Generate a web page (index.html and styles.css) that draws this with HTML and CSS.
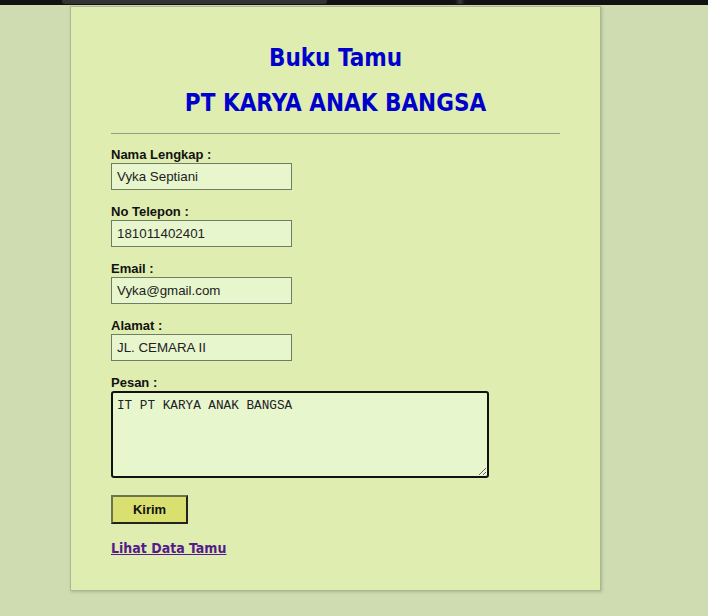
FILE: index.html
```html
<!DOCTYPE html>
<html lang="id">
<head>
<meta charset="utf-8">
<title>Buku Tamu</title>
<link rel="stylesheet" href="styles.css">
</head>
<body>
<div class="topbar"><span class="tab"></span><span class="tab2"></span></div>
<div class="card">
  <h2 class="title first">Buku Tamu</h2>
  <h2 class="title">PT KARYA ANAK BANGSA</h2>
  <hr class="rule">
  <form class="form">
    <div class="field">
      <label class="label">Nama Lengkap :</label>
      <input class="input" type="text" value="Vyka Septiani">
    </div>
    <div class="field">
      <label class="label">No Telepon :</label>
      <input class="input" type="text" value="181011402401">
    </div>
    <div class="field">
      <label class="label">Email :</label>
      <input class="input" type="text" value="Vyka@gmail.com">
    </div>
    <div class="field">
      <label class="label">Alamat :</label>
      <input class="input" type="text" value="JL. CEMARA II">
    </div>
    <div class="field">
      <label class="label">Pesan :</label>
      <textarea class="textarea">IT PT KARYA ANAK BANGSA</textarea>
    </div>
    <button class="button" type="button">Kirim</button>
  </form>
  <a class="link" href="#">Lihat Data Tamu</a>
</div>
</body>
</html>
```
FILE: styles.css
```css
html, body {
  margin: 0;
  padding: 0;
}
body {
  background: #cfdcb2;
  font-family: "Liberation Sans", Arial, sans-serif;
  height: 616px;
  overflow: hidden;
}
.topbar {
  height: 5px;
  background: #121212;
  position: relative;
  margin-bottom: 1px;
}
.tab {
  position: absolute;
  left: 62px;
  width: 265px;
  top: 0;
  height: 4px;
  background: #333333;
  border-radius: 0 0 3px 3px;
}
.tab2 {
  position: absolute;
  left: 455px;
  width: 10px;
  top: 0;
  height: 4px;
  background: linear-gradient(90deg, #121212, #3a3a3a, #121212);
}
.card {
  margin-left: 70px;
  width: 449px;
  padding: 37px 40px 33px;
  background: #dfeeb0;
  border: 1px solid #a9b993;
  box-shadow: 1px 1px 3px rgba(0, 0, 0, 0.18);
}
.title {
  margin: 0;
  text-align: center;
  font-family: "DejaVu Sans Condensed", "DejaVu Sans", sans-serif;
  font-stretch: condensed;
  font-weight: 700;
  font-size: 24px;
  line-height: 29px;
  color: #0000cc;
}
.title + .title {
  margin-top: 16px;
}
.rule {
  margin: 15px 0 14px;
  border: 0;
  border-top: 1px solid #979c88;
  height: 0;
}
.form {
  margin: 0;
}
.field {
  margin-bottom: 15px;
}
.label {
  display: block;
  font-family: "Liberation Sans", Arial, sans-serif;
  font-weight: 700;
  font-size: 13px;
  line-height: 14px;
  color: #111111;
  margin-bottom: 1px;
}
.input {
  display: block;
  box-sizing: border-box;
  width: 181px;
  height: 27px;
  margin: 0;
  padding: 0 5px;
  border: 1px solid #6f7d62;
  background: #e8f6cd;
  font-family: "Liberation Sans", Arial, sans-serif;
  font-size: 13.33px;
  color: #222222;
  outline: none;
}
.textarea {
  display: block;
  box-sizing: border-box;
  width: 378px;
  height: 87px;
  margin: 0;
  padding: 6px 4px 4px;
  border: 2px solid #111111;
  border-radius: 3px;
  background: #e8f6cd;
  font-family: "Liberation Mono", "Courier New", monospace;
  font-size: 12.7px;
  line-height: 14px;
  color: #222222;
  outline: none;
}
.field:last-of-type {
  margin-bottom: 17px;
}
.button {
  display: block;
  box-sizing: border-box;
  width: 77px;
  height: 29px;
  margin: 0 0 15px;
  padding: 0;
  background: #d9e070;
  border: 2px solid;
  border-color: #6b7352 #222222 #222222 #6b7352;
  font-family: "Liberation Sans", Arial, sans-serif;
  font-weight: 700;
  font-size: 13px;
  color: #111111;
}
.link {
  display: inline-block;
  font-family: "DejaVu Sans Condensed", "DejaVu Sans", sans-serif;
  font-stretch: condensed;
  font-weight: 700;
  font-size: 14px;
  line-height: 17px;
  color: #551a8b;
  text-decoration: underline;
}
```
